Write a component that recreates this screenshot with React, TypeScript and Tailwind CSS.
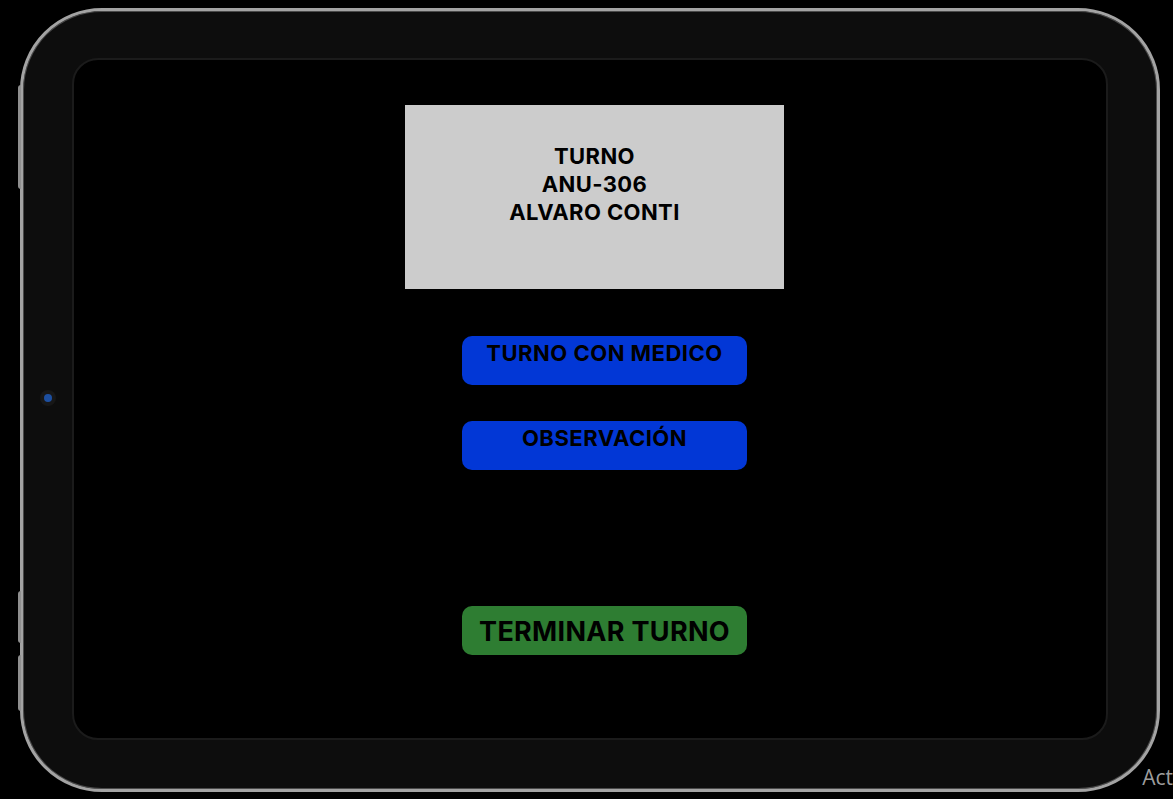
export default function App() {
  return (
    <div
      className="w-[1173px] h-[799px] bg-black overflow-hidden relative pt-[8px] pl-[20px]"
      style={{ fontFamily: "Inter, 'Noto Sans', Arial, sans-serif" }}
    >
      {/* Device */}
      <div className="relative w-[1140px] h-[784px] rounded-[82px] border-[3px] border-[#a3a3a3] bg-[#0d0d0d] shadow-[inset_0_0_0_1px_#4a4a4a] pt-[47px] pl-[49px]">
        {/* side buttons */}
        <div className="absolute left-[-5px] top-[74px] w-[3px] h-[104px] rounded-l-sm bg-[#8f8f8f]" />
        <div className="absolute left-[-5px] top-[580px] w-[3px] h-[52px] rounded-l-sm bg-[#8f8f8f]" />
        <div className="absolute left-[-5px] top-[644px] w-[3px] h-[56px] rounded-l-sm bg-[#8f8f8f]" />

        {/* camera */}
        <div className="absolute left-[17px] top-[379px] w-[16px] h-[16px] rounded-full bg-[#171717] flex items-center justify-center">
          <div className="w-[8px] h-[8px] rounded-full bg-[#1d4fa0]" />
        </div>

        {/* Screen */}
        <div className="w-[1036px] h-[682px] rounded-[26px] border-2 border-[#1b1b1b] bg-black pt-[45px] pl-[331px]">
          <div className="flex flex-col items-start">
            <div className="w-[379px] h-[184px] bg-[#cccccc] pt-[37px] text-center text-[22px] leading-[28px] font-bold text-black tracking-[0.4px]">
              <div>TURNO</div>
              <div>ANU-306</div>
              <div>ALVARO CONTI</div>
            </div>

            <div className="ml-[57px] mt-[47px] flex flex-col">
              <div className="flex flex-col gap-[36px]">
                <button className="w-[285px] h-[49px] rounded-[10px] bg-[#0237d6] text-black text-[22px] font-bold leading-[28px] pt-[3px] tracking-[0.5px] flex justify-center items-start">
                  TURNO CON MEDICO
                </button>
                <button className="w-[285px] h-[49px] rounded-[10px] bg-[#0237d6] text-black text-[22px] font-bold leading-[28px] pt-[3px] tracking-[0.5px] flex justify-center items-start">
                  OBSERVACIÓN
                </button>
              </div>

              <button className="mt-[136px] w-[285px] h-[49px] rounded-[10px] bg-[#2e7d32] text-black text-[27px] font-bold tracking-[0.3px] pt-[3px] flex justify-center items-center">
                TERMINAR TURNO
              </button>
            </div>
          </div>
        </div>
      </div>

      {/* watermark */}
      <div
        className="absolute right-[0px] top-[762px] text-[21px] leading-[30px] text-[#9d9d9d] whitespace-nowrap"
        style={{ fontFamily: "'Open Sans', 'Noto Sans', sans-serif" }}
      >
        Act
      </div>
    </div>
  );
}
